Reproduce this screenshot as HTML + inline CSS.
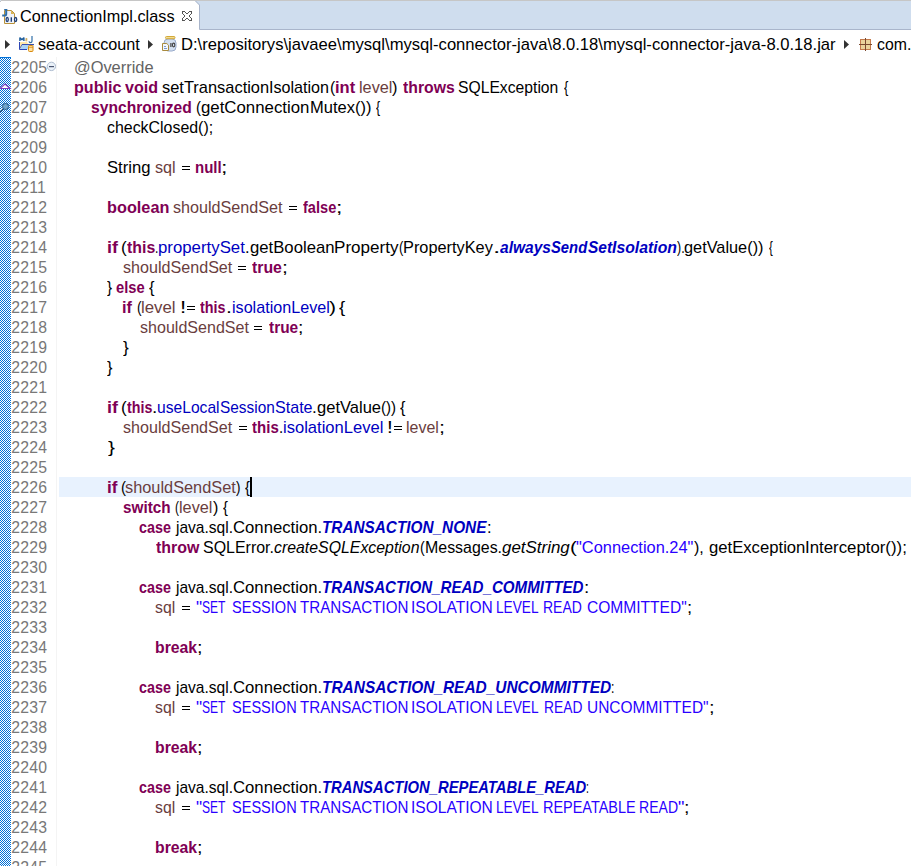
<!DOCTYPE html>
<html><head><meta charset="utf-8">
<style>
html,body{margin:0;padding:0;background:#fff;}
body{width:911px;height:866px;overflow:hidden;position:relative;font-family:"Liberation Sans",sans-serif;font-size:15px;}
.abs{position:absolute;left:0;top:0;}
.h{position:absolute;line-height:20px;white-space:pre;transform-origin:0 0;font-size:15.75px;}
.sep{position:absolute;left:56px;top:57px;width:1px;height:809px;background:#F4F4F4;}
.row{position:absolute;left:0;width:911px;height:20px;}
.row.hl::before{content:"";position:absolute;left:59px;top:0;width:852px;height:20px;background:#E8F2FE;}
.row span,.row i{position:absolute;top:1px;line-height:20px;white-space:pre;transform-origin:0 0;font-style:normal;font-size:15.75px;}
.row i.ln{left:11.3px;color:#787878;font-size:15.8px;letter-spacing:0.21px;top:1px;}
.eq{position:absolute;top:9px;width:8px;height:2px;border-top:1px solid #000;border-bottom:1px solid #000;}
.cur{position:absolute;left:250px;top:477px;width:2px;height:20px;background:#000;}
</style></head><body>
<svg class="abs" width="911" height="57" viewBox="0 0 911 57">
 <rect x="0" y="0" width="911" height="1" fill="#C6C6C6"/>
 <rect x="0" y="0" width="1" height="1" fill="#D3E0EF"/><rect x="0" y="1" width="1" height="1" fill="#C4C4C4"/>
 <polygon points="195,1 911,1 911,29 199,29 199,5" fill="#CFDDEE"/>
 <polyline points="195.5,1 199.5,5 199.5,29.5 911,29.5" fill="none" stroke="#A9B5CB" stroke-width="1"/>
 <!-- class file icon -->
 <polygon points="4.5,10.5 11.5,10.5 14.5,13.5 14.5,23.5 4.5,23.5" fill="#EEF2FA" stroke="#B8913A" stroke-width="1"/>
 <polygon points="11,10.5 14.5,14 11,14" fill="#D9B24F"/>
 <path d="M6.2,9 V14 Q6.2,15.6 4.4,15.6 H2.2" fill="none" stroke="#2F6EA8" stroke-width="2"/><rect x="4.2" y="9" width="3" height="1.2" fill="#2F6EA8"/>
 <g fill="none" stroke="#1F3F78" stroke-width="1.3">
  <ellipse cx="7.2" cy="19.5" rx="1.1" ry="2"/>
  <ellipse cx="15.6" cy="19.5" rx="1.1" ry="2"/>
 </g>
 <rect x="10.6" y="17.3" width="1.4" height="4.5" fill="#1F3F78"/>
 <!-- close X -->
 <g fill="#555">
  <rect x="182" y="11" width="3" height="1"/><rect x="189" y="11" width="3" height="1"/>
  <rect x="182" y="12" width="1" height="2"/><rect x="185" y="12" width="1" height="1"/><rect x="188" y="12" width="1" height="1"/><rect x="191" y="12" width="1" height="2"/>
  <rect x="186" y="13" width="2" height="1"/>
  <rect x="183" y="14" width="1" height="1"/><rect x="190" y="14" width="1" height="1"/>
  <rect x="184" y="15" width="1" height="2"/><rect x="189" y="15" width="1" height="2"/>
  <rect x="183" y="17" width="1" height="1"/><rect x="190" y="17" width="1" height="1"/>
  <rect x="182" y="18" width="1" height="2"/><rect x="186" y="18" width="2" height="1"/><rect x="191" y="18" width="1" height="2"/>
  <rect x="185" y="19" width="1" height="1"/><rect x="188" y="19" width="1" height="1"/>
  <rect x="182" y="20" width="3" height="1"/><rect x="189" y="20" width="3" height="1"/>
 </g>
 <!-- breadcrumb arrows -->
 <polygon points="5,40 10,44.5 5,49" fill="#333"/>
 <polygon points="148,40 153,44.5 148,49" fill="#333"/>
 <polygon points="844,40 849,44.5 844,49" fill="#333"/>
 <!-- maven project icon -->
 <path d="M19.9,40.9 V37.6 L21.9,39.8 L23.9,37.6 V40.9" fill="none" stroke="#1A5A9A" stroke-width="1.4" stroke-linejoin="bevel"/>
 <path d="M25.6,38.6 H27 V39.6 H25.8 V40.8 H27.3" fill="none" stroke="#C9A24E" stroke-width="0.9"/>
 <path d="M32,36 V41.2 Q32,42.6 30.4,42.6 Q29.2,42.6 29,41.4" fill="none" stroke="#2F6EA8" stroke-width="1.2"/>
 <polygon points="19.5,42 27,42 28,43.8 34,43.8 33,49.5 19.5,49.5" fill="#FFE7A6"/>
 <polygon points="22.5,44.5 34,44.5 32,49.2 20,49.2" fill="#A9D3F7"/>
 <polyline points="19.5,42 19.5,49.5 27,49.5" fill="none" stroke="#2D45B5" stroke-width="1"/>
 <line x1="22" y1="44.5" x2="34" y2="44.5" stroke="#3A4FB0" stroke-width="1"/>
 <line x1="22" y1="44.5" x2="19.8" y2="48.5" stroke="#3A4FB0" stroke-width="0.8"/>
 <rect x="28.5" y="45.5" width="4.5" height="6" rx="1" fill="#FFE2A0" stroke="#D98A10" stroke-width="1"/>
 <line x1="28.5" y1="47.3" x2="33" y2="47.3" stroke="#D98A10" stroke-width="0.8"/>
 <!-- jar icon -->
 <rect x="164" y="39" width="12" height="12" rx="4" fill="#D3DFF0" stroke="#98AACB" stroke-width="1"/>
 <rect x="165.5" y="36.5" width="9.5" height="2.2" rx="1" fill="#F3DD90" stroke="#D2A83A" stroke-width="1"/>
 <rect x="170.3" y="43" width="1.2" height="4" fill="#444"/>
 <ellipse cx="173.6" cy="45" rx="1.2" ry="1.9" fill="none" stroke="#444" stroke-width="1.1"/>
 <polygon points="162.5,43.5 166.8,43.5 168.5,45.2 168.5,50.5 162.5,50.5" fill="#F4F7FC" stroke="#A88A3E" stroke-width="1"/>
 <rect x="164" y="46" width="2" height="0.9" fill="#6A8FD0"/><rect x="164" y="48" width="3" height="0.9" fill="#6A8FD0"/>
 <!-- package icon -->
 <rect x="860.5" y="39.5" width="10" height="10" fill="#EAD39C" stroke="#C47A4C" stroke-width="1"/>
 <line x1="865.5" y1="38" x2="865.5" y2="51" stroke="#7A4A30" stroke-width="1"/>
 <line x1="859" y1="44.5" x2="872" y2="44.5" stroke="#7A4A30" stroke-width="1"/>
</svg>
<span class="h" style="left:20.20px;top:7px;color:#000;transform:scaleX(1.0322)">ConnectionImpl.class</span>
<span class="h" style="left:38.06px;top:35px;color:#000;transform:scaleX(1.0290)">seata-account</span>
<span class="h" style="left:180.61px;top:35px;color:#000;transform:scaleX(1.0548)">D:\repositorys\javaee\mysql\mysql-connector-java\8.0.18\mysql-connector-java-8.0.18.jar</span>
<span class="h" style="left:876.63px;top:35px;color:#000;transform:scaleX(1.0049)">com.</span>
<svg class="abs" style="top:57px" width="60" height="809" viewBox="0 57 60 809">
 <defs><pattern id="ck" x="0" y="57" width="2" height="2" patternUnits="userSpaceOnUse"><rect width="2" height="2" fill="#fff"/><rect x="1" width="1" height="1" fill="#0070D8"/><rect y="1" width="1" height="1" fill="#0070D8"/></pattern></defs>
 <rect x="0" y="57" width="11" height="809" fill="url(#ck)"/>
 <rect x="0" y="57" width="11" height="1" fill="#0070D8"/>
 <!-- override triangle -->
 <polygon points="5,84 10,88.5 0,88.5" fill="#fff" stroke="#7B3FC0" stroke-width="1.2"/>
 <!-- magnifier/mark icon -->
 <line x1="0" y1="112" x2="3.5" y2="108.5" stroke="#1A4F80" stroke-width="1.6"/>
 <line x1="0.3" y1="110.7" x2="3" y2="108" stroke="#E8F0F8" stroke-width="0.7"/>
 <circle cx="5.5" cy="106.5" r="3" fill="#6FA4CC" stroke="#24507A" stroke-width="0.9"/>
 <!-- fold icon -->
 <circle cx="51.4" cy="66.4" r="4.2" fill="#EAF1F8" stroke="#AFBDD0" stroke-width="1"/>
 <rect x="49" y="66" width="5" height="1.2" fill="#4A5570"/>
</svg>
<div class="sep"></div>
<div class="row" style="top:57px"><i class="ln">2205</i><span style="left:74.26px;color:#646464;transform:scaleX(1.0410)">@Override</span></div>
<div class="row" style="top:77px"><i class="ln">2206</i><span style="left:74.46px;color:#7F0055;font-weight:bold;transform:scaleX(1.0237)">public</span><span style="left:124.98px;color:#7F0055;font-weight:bold;transform:scaleX(1.0237)">void</span><span style="left:162.26px;color:#000000;transform:scaleX(1.0430)">setTransaction</span><span style="left:269.45px;color:#000000;transform:scaleX(1.0237)">Isolation</span><span style="left:329.52px;color:#000000;transform:scaleX(0.9861)">(</span><span style="left:334.70px;color:#7F0055;font-weight:bold;transform:scaleX(1.0489)">int</span><span style="left:358.94px;color:#6A3E3E;transform:scaleX(1.0328)">level</span><span style="left:392.41px;color:#000000;transform:scaleX(1.0417)">)</span><span style="left:402.61px;color:#7F0055;font-weight:bold;transform:scaleX(1.0019)">throws</span><span style="left:458.48px;color:#000000;transform:scaleX(0.9964)">SQLException</span><span style="left:563.64px;color:#000000;transform:scaleX(0.8239)">{</span></div>
<div class="row" style="top:97px"><i class="ln">2207</i><span style="left:91.45px;color:#7F0055;font-weight:bold;transform:scaleX(0.9924)">synchronized</span><span style="left:196.12px;color:#000000;transform:scaleX(0.9362)">(</span><span style="left:201.04px;color:#000000;transform:scaleX(1.0673)">getConnection</span><span style="left:309.51px;color:#000000;transform:scaleX(1.0479)">Mutex())</span><span style="left:376.34px;color:#000000;transform:scaleX(0.7859)">{</span></div>
<div class="row" style="top:117px"><i class="ln">2208</i><span style="left:106.83px;color:#000000;transform:scaleX(1.0105)">checkClosed();</span></div>
<div class="row" style="top:137px"><i class="ln">2209</i></div>
<div class="row" style="top:157px"><i class="ln">2210</i><span style="left:106.98px;color:#000000;transform:scaleX(1.0553)">String</span><span style="left:155.26px;color:#6A3E3E;transform:scaleX(1.0274)">sql</span><b class="eq" style="left:182px"></b><span style="left:194.56px;color:#7F0055;font-weight:bold;transform:scaleX(0.9544)">null</span><span style="left:221.28px;color:#000000;transform:scaleX(1.4697)">;</span></div>
<div class="row" style="top:177px"><i class="ln">2211</i></div>
<div class="row" style="top:197px"><i class="ln">2212</i><span style="left:106.66px;color:#7F0055;font-weight:bold;transform:scaleX(1.0333)">boolean</span><span style="left:173.06px;color:#6A3E3E;transform:scaleX(1.0251)">shouldSendSet</span><b class="eq" style="left:289px"></b><span style="left:302.73px;color:#7F0055;font-weight:bold;transform:scaleX(0.9272)">false</span><span style="left:336.04px;color:#000000;transform:scaleX(1.4575)">;</span></div>
<div class="row" style="top:217px"><i class="ln">2213</i></div>
<div class="row" style="top:237px"><i class="ln">2214</i><span style="left:106.60px;color:#7F0055;font-weight:bold;transform:scaleX(1.1396)">if</span><span style="left:121.02px;color:#000000;transform:scaleX(1.0827)">(</span><span style="left:126.71px;color:#7F0055;font-weight:bold;transform:scaleX(1.0079)">this</span><span style="left:154.95px;color:#000000;transform:scaleX(0.7632)">.</span><span style="left:158.28px;color:#0000C0;transform:scaleX(1.0666)">propertySet</span><span style="left:245.16px;color:#000000;transform:scaleX(1.0461)">.</span><span style="left:249.74px;color:#000000;transform:scaleX(1.0606)">getBoolean</span><span style="left:334.31px;color:#000000;transform:scaleX(1.0834)">Property</span><span style="left:398.82px;color:#000000;transform:scaleX(0.8161)">(</span><span style="left:403.11px;color:#000000;transform:scaleX(1.0365)">PropertyKey</span><span style="left:492.96px;color:#000000;transform:scaleX(1.6826)">.</span><span style="left:500.32px;color:#0000C0;font-weight:bold;font-style:italic;transform:scaleX(0.9864)">always</span><span style="left:551.31px;color:#0000C0;font-weight:bold;font-style:italic;transform:scaleX(0.9399)">Send</span><span style="left:587.51px;color:#0000C0;font-weight:bold;font-style:italic;transform:scaleX(0.9837)">Set</span><span style="left:611.62px;color:#0000C0;font-weight:bold;font-style:italic;transform:scaleX(1.0031)">Isolation</span><span style="left:676.61px;color:#000000;transform:scaleX(0.7928)">).</span><span style="left:684.24px;color:#000000;transform:scaleX(1.0359)">getValue())</span><span style="left:769.14px;color:#000000;transform:scaleX(0.7289)">{</span></div>
<div class="row" style="top:257px"><i class="ln">2215</i><span style="left:123.36px;color:#6A3E3E;transform:scaleX(1.0232)">shouldSendSet</span><b class="eq" style="left:238px"></b><span style="left:252.01px;color:#7F0055;font-weight:bold;transform:scaleX(1.0055)">true</span><span style="left:281.94px;color:#000000;transform:scaleX(1.3432)">;</span></div>
<div class="row" style="top:277px"><i class="ln">2216</i><span style="left:107.24px;color:#000000;transform:scaleX(0.9583)">}</span><span style="left:116.38px;color:#7F0055;font-weight:bold;transform:scaleX(0.9342)">else</span><span style="left:148.54px;color:#000000;transform:scaleX(1.0518)">{</span></div>
<div class="row" style="top:297px"><i class="ln">2217</i><span style="left:122.20px;color:#7F0055;font-weight:bold;transform:scaleX(1.0357)">if</span><span style="left:136.82px;color:#000000;transform:scaleX(0.8601)">(</span><span style="left:141.34px;color:#6A3E3E;transform:scaleX(1.0682)">level</span><span style="left:179.58px;color:#000000;transform:scaleX(1.4066)">!</span><b class="eq" style="left:187px"></b><span style="left:200.11px;color:#7F0055;font-weight:bold;transform:scaleX(0.9116)">this</span><span style="left:225.65px;color:#000000;transform:scaleX(1.3487)">.</span><span style="left:231.55px;color:#0000C0;transform:scaleX(1.0243)">isolationLevel</span><span style="left:329.35px;color:#000000;transform:scaleX(1.3377)">)</span><span style="left:339.44px;color:#000000;transform:scaleX(1.1847)">{</span></div>
<div class="row" style="top:317px"><i class="ln">2218</i><span style="left:139.56px;color:#6A3E3E;transform:scaleX(1.0194)">shouldSendSet</span><b class="eq" style="left:254px"></b><span style="left:268.81px;color:#7F0055;font-weight:bold;transform:scaleX(0.9820)">true</span><span style="left:298.04px;color:#000000;transform:scaleX(1.2290)">;</span></div>
<div class="row" style="top:337px"><i class="ln">2219</i><span style="left:122.54px;color:#000000;transform:scaleX(1.0912)">}</span></div>
<div class="row" style="top:357px"><i class="ln">2220</i><span style="left:106.84px;color:#000000;transform:scaleX(1.0343)">}</span></div>
<div class="row" style="top:377px"><i class="ln">2221</i></div>
<div class="row" style="top:397px"><i class="ln">2222</i><span style="left:106.60px;color:#7F0055;font-weight:bold;transform:scaleX(1.1396)">if</span><span style="left:121.02px;color:#000000;transform:scaleX(1.0827)">(</span><span style="left:126.71px;color:#7F0055;font-weight:bold;transform:scaleX(0.9050)">this</span><span style="left:152.06px;color:#000000;transform:scaleX(1.2149)">.</span><span style="left:157.38px;color:#0000C0;transform:scaleX(0.9925)">useLocal</span><span style="left:219.98px;color:#0000C0;transform:scaleX(0.9778)">Session</span><span style="left:274.78px;color:#0000C0;transform:scaleX(1.0216)">State</span><span style="left:312.36px;color:#000000;transform:scaleX(1.0918)">.</span><span style="left:317.14px;color:#000000;transform:scaleX(1.0500)">getValue</span><span style="left:381.22px;color:#000000;transform:scaleX(0.9558)">())</span><span style="left:400.44px;color:#000000;transform:scaleX(1.0328)">{</span></div>
<div class="row" style="top:417px"><i class="ln">2223</i><span style="left:123.16px;color:#6A3E3E;transform:scaleX(1.0223)">shouldSendSet</span><b class="eq" style="left:239px"></b><span style="left:251.91px;color:#7F0055;font-weight:bold;transform:scaleX(0.9550)">this</span><span style="left:278.66px;color:#000000;transform:scaleX(0.9565)">.</span><span style="left:282.85px;color:#0000C0;transform:scaleX(1.0516)">isolationLevel</span><span style="left:387.18px;color:#000000;transform:scaleX(1.3151)">!</span><b class="eq" style="left:394px"></b><span style="left:406.24px;color:#6A3E3E;transform:scaleX(1.0126)">level</span><span style="left:439.05px;color:#000000;transform:scaleX(1.3626)">;</span></div>
<div class="row" style="top:437px"><i class="ln">2224</i><span style="left:108.00px;color:#000000;transform:scaleX(1.3082)">}</span></div>
<div class="row" style="top:457px"><i class="ln">2225</i></div>
<div class="row hl" style="top:477px"><i class="ln">2226</i><span style="left:106.60px;color:#7F0055;font-weight:bold;transform:scaleX(1.0877)">if</span><span style="left:120.52px;color:#000000;transform:scaleX(0.9406)">(</span><span style="left:125.46px;color:#6A3E3E;transform:scaleX(1.0372)">shouldSendSet</span><span style="left:236.31px;color:#000000;transform:scaleX(0.8512)">)</span><span style="left:244.64px;color:#000000;transform:scaleX(0.9378)">{</span></div>
<div class="row" style="top:497px"><i class="ln">2227</i><span style="left:123.15px;color:#7F0055;font-weight:bold;transform:scaleX(0.9714)">switch</span><span style="left:175.22px;color:#000000;transform:scaleX(0.7458)">(</span><span style="left:179.14px;color:#6A3E3E;transform:scaleX(1.0328)">level</span><span style="left:212.61px;color:#000000;transform:scaleX(1.0227)">)</span><span style="left:222.94px;color:#000000;transform:scaleX(0.9378)">{</span></div>
<div class="row" style="top:517px"><i class="ln">2228</i><span style="left:139.28px;color:#7F0055;font-weight:bold;transform:scaleX(0.9113)">case</span><span style="left:175.98px;color:#000000;transform:scaleX(0.9865)">java.sql.</span><span style="left:233.00px;color:#000000;transform:scaleX(1.0605)">Connection.</span><span style="left:322.18px;color:#0000C0;font-weight:bold;font-style:italic;transform:scaleX(0.9733)">TRANSACTION_NONE</span><span style="left:486.56px;color:#000000;transform:scaleX(1.0460)">:</span></div>
<div class="row" style="top:537px"><i class="ln">2229</i><span style="left:155.71px;color:#7F0055;font-weight:bold;transform:scaleX(1.0137)">throw</span><span style="left:203.48px;color:#000000;transform:scaleX(1.0138)">SQLError.</span><span style="left:274.48px;color:#000000;font-style:italic;transform:scaleX(1.0072)">createSQLException</span><span style="left:420.02px;color:#000000;transform:scaleX(0.8923)">(</span><span style="left:424.71px;color:#000000;transform:scaleX(1.0115)">Messages.</span><span style="left:501.77px;color:#000000;font-style:italic;transform:scaleX(1.0744)">getString</span><span style="left:569.52px;color:#000000;transform:scaleX(1.3157)">(</span><span style="left:576.43px;color:#2A00FF;transform:scaleX(1.0413)">&quot;Connection.24&quot;</span><span style="left:693.91px;color:#000000;transform:scaleX(1.0189)">),</span><span style="left:708.74px;color:#000000;transform:scaleX(1.0583)">getException</span><span style="left:805.15px;color:#000000;transform:scaleX(1.0672)">Interceptor());</span></div>
<div class="row" style="top:557px"><i class="ln">2230</i></div>
<div class="row" style="top:577px"><i class="ln">2231</i><span style="left:139.28px;color:#7F0055;font-weight:bold;transform:scaleX(0.9113)">case</span><span style="left:175.98px;color:#000000;transform:scaleX(0.9865)">java.sql.</span><span style="left:233.00px;color:#000000;transform:scaleX(1.0605)">Connection.</span><span style="left:322.18px;color:#0000C0;font-weight:bold;font-style:italic;transform:scaleX(0.9611)">TRANSACTION_READ_COMMITTED</span><span style="left:583.75px;color:#000000;transform:scaleX(1.2096)">:</span></div>
<div class="row" style="top:597px"><i class="ln">2232</i><span style="left:155.36px;color:#6A3E3E;transform:scaleX(1.0025)">sql</span><b class="eq" style="left:182px"></b><span style="left:196.33px;color:#2A00FF;transform:scaleX(1.1001)">&quot;</span><span style="left:202.48px;color:#2A00FF;transform:scaleX(0.7666)">SET</span><span style="left:232.08px;color:#2A00FF;transform:scaleX(0.9229)">SESSION</span><span style="left:299.95px;color:#2A00FF;transform:scaleX(0.9598)">TRANSACTION</span><span style="left:411.45px;color:#2A00FF;transform:scaleX(0.9879)">ISOLATION</span><span style="left:496.01px;color:#2A00FF;transform:scaleX(0.8671)">LEVEL</span><span style="left:543.31px;color:#2A00FF;transform:scaleX(0.8879)">READ</span><span style="left:587.20px;color:#2A00FF;transform:scaleX(0.9881)">COMMITTED&quot;</span><span style="left:686.97px;color:#000000;transform:scaleX(1.1762)">;</span></div>
<div class="row" style="top:617px"><i class="ln">2233</i></div>
<div class="row" style="top:637px"><i class="ln">2234</i><span style="left:154.66px;color:#7F0055;font-weight:bold;transform:scaleX(1.0018)">break</span><span style="left:196.78px;color:#000000;transform:scaleX(1.2641)">;</span></div>
<div class="row" style="top:657px"><i class="ln">2235</i></div>
<div class="row" style="top:677px"><i class="ln">2236</i><span style="left:139.28px;color:#7F0055;font-weight:bold;transform:scaleX(0.9113)">case</span><span style="left:175.98px;color:#000000;transform:scaleX(0.9865)">java.sql.</span><span style="left:233.00px;color:#000000;transform:scaleX(1.0605)">Connection.</span><span style="left:322.18px;color:#0000C0;font-weight:bold;font-style:italic;transform:scaleX(0.9805)">TRANSACTION_READ_UNCOMMITTED</span><span style="left:611.35px;color:#000000;transform:scaleX(0.7753)">:</span></div>
<div class="row" style="top:697px"><i class="ln">2237</i><span style="left:155.36px;color:#6A3E3E;transform:scaleX(1.0025)">sql</span><b class="eq" style="left:182px"></b><span style="left:196.33px;color:#2A00FF;transform:scaleX(1.1001)">&quot;</span><span style="left:202.48px;color:#2A00FF;transform:scaleX(0.7666)">SET</span><span style="left:232.08px;color:#2A00FF;transform:scaleX(0.9229)">SESSION</span><span style="left:299.95px;color:#2A00FF;transform:scaleX(0.9598)">TRANSACTION</span><span style="left:411.45px;color:#2A00FF;transform:scaleX(0.9879)">ISOLATION</span><span style="left:496.01px;color:#2A00FF;transform:scaleX(0.8671)">LEVEL</span><span style="left:543.71px;color:#2A00FF;transform:scaleX(0.8765)">READ</span><span style="left:587.28px;color:#2A00FF;transform:scaleX(0.9826)">UNCOMMITTED&quot;</span><span style="left:708.85px;color:#000000;transform:scaleX(1.2717)">;</span></div>
<div class="row" style="top:717px"><i class="ln">2238</i></div>
<div class="row" style="top:737px"><i class="ln">2239</i><span style="left:154.66px;color:#7F0055;font-weight:bold;transform:scaleX(1.0018)">break</span><span style="left:196.78px;color:#000000;transform:scaleX(1.2641)">;</span></div>
<div class="row" style="top:757px"><i class="ln">2240</i></div>
<div class="row" style="top:777px"><i class="ln">2241</i><span style="left:139.28px;color:#7F0055;font-weight:bold;transform:scaleX(0.9113)">case</span><span style="left:175.98px;color:#000000;transform:scaleX(0.9865)">java.sql.</span><span style="left:233.00px;color:#000000;transform:scaleX(1.0605)">Connection.</span><span style="left:322.18px;color:#0000C0;font-weight:bold;font-style:italic;transform:scaleX(0.9398)">TRANSACTION_REPEATABLE_READ</span><span style="left:586.45px;color:#000000;transform:scaleX(0.6610)">:</span></div>
<div class="row" style="top:797px"><i class="ln">2242</i><span style="left:155.36px;color:#6A3E3E;transform:scaleX(1.0025)">sql</span><b class="eq" style="left:182px"></b><span style="left:196.33px;color:#2A00FF;transform:scaleX(1.1001)">&quot;</span><span style="left:202.48px;color:#2A00FF;transform:scaleX(0.7666)">SET</span><span style="left:232.08px;color:#2A00FF;transform:scaleX(0.9229)">SESSION</span><span style="left:299.95px;color:#2A00FF;transform:scaleX(0.9598)">TRANSACTION</span><span style="left:411.45px;color:#2A00FF;transform:scaleX(0.9879)">ISOLATION</span><span style="left:496.01px;color:#2A00FF;transform:scaleX(0.8671)">LEVEL</span><span style="left:543.21px;color:#2A00FF;transform:scaleX(0.9178)">REPEATABLE</span><span style="left:638.71px;color:#2A00FF;transform:scaleX(0.8925)">READ</span><span style="left:677.75px;color:#2A00FF;transform:scaleX(1.1469)">&quot;</span><span style="left:684.17px;color:#000000;transform:scaleX(1.2448)">;</span></div>
<div class="row" style="top:817px"><i class="ln">2243</i></div>
<div class="row" style="top:837px"><i class="ln">2244</i><span style="left:154.66px;color:#7F0055;font-weight:bold;transform:scaleX(1.0018)">break</span><span style="left:196.78px;color:#000000;transform:scaleX(1.2641)">;</span></div>
<div class="row" style="top:857px"><i class="ln">2245</i></div>
<div class="cur"></div>
</body></html>
